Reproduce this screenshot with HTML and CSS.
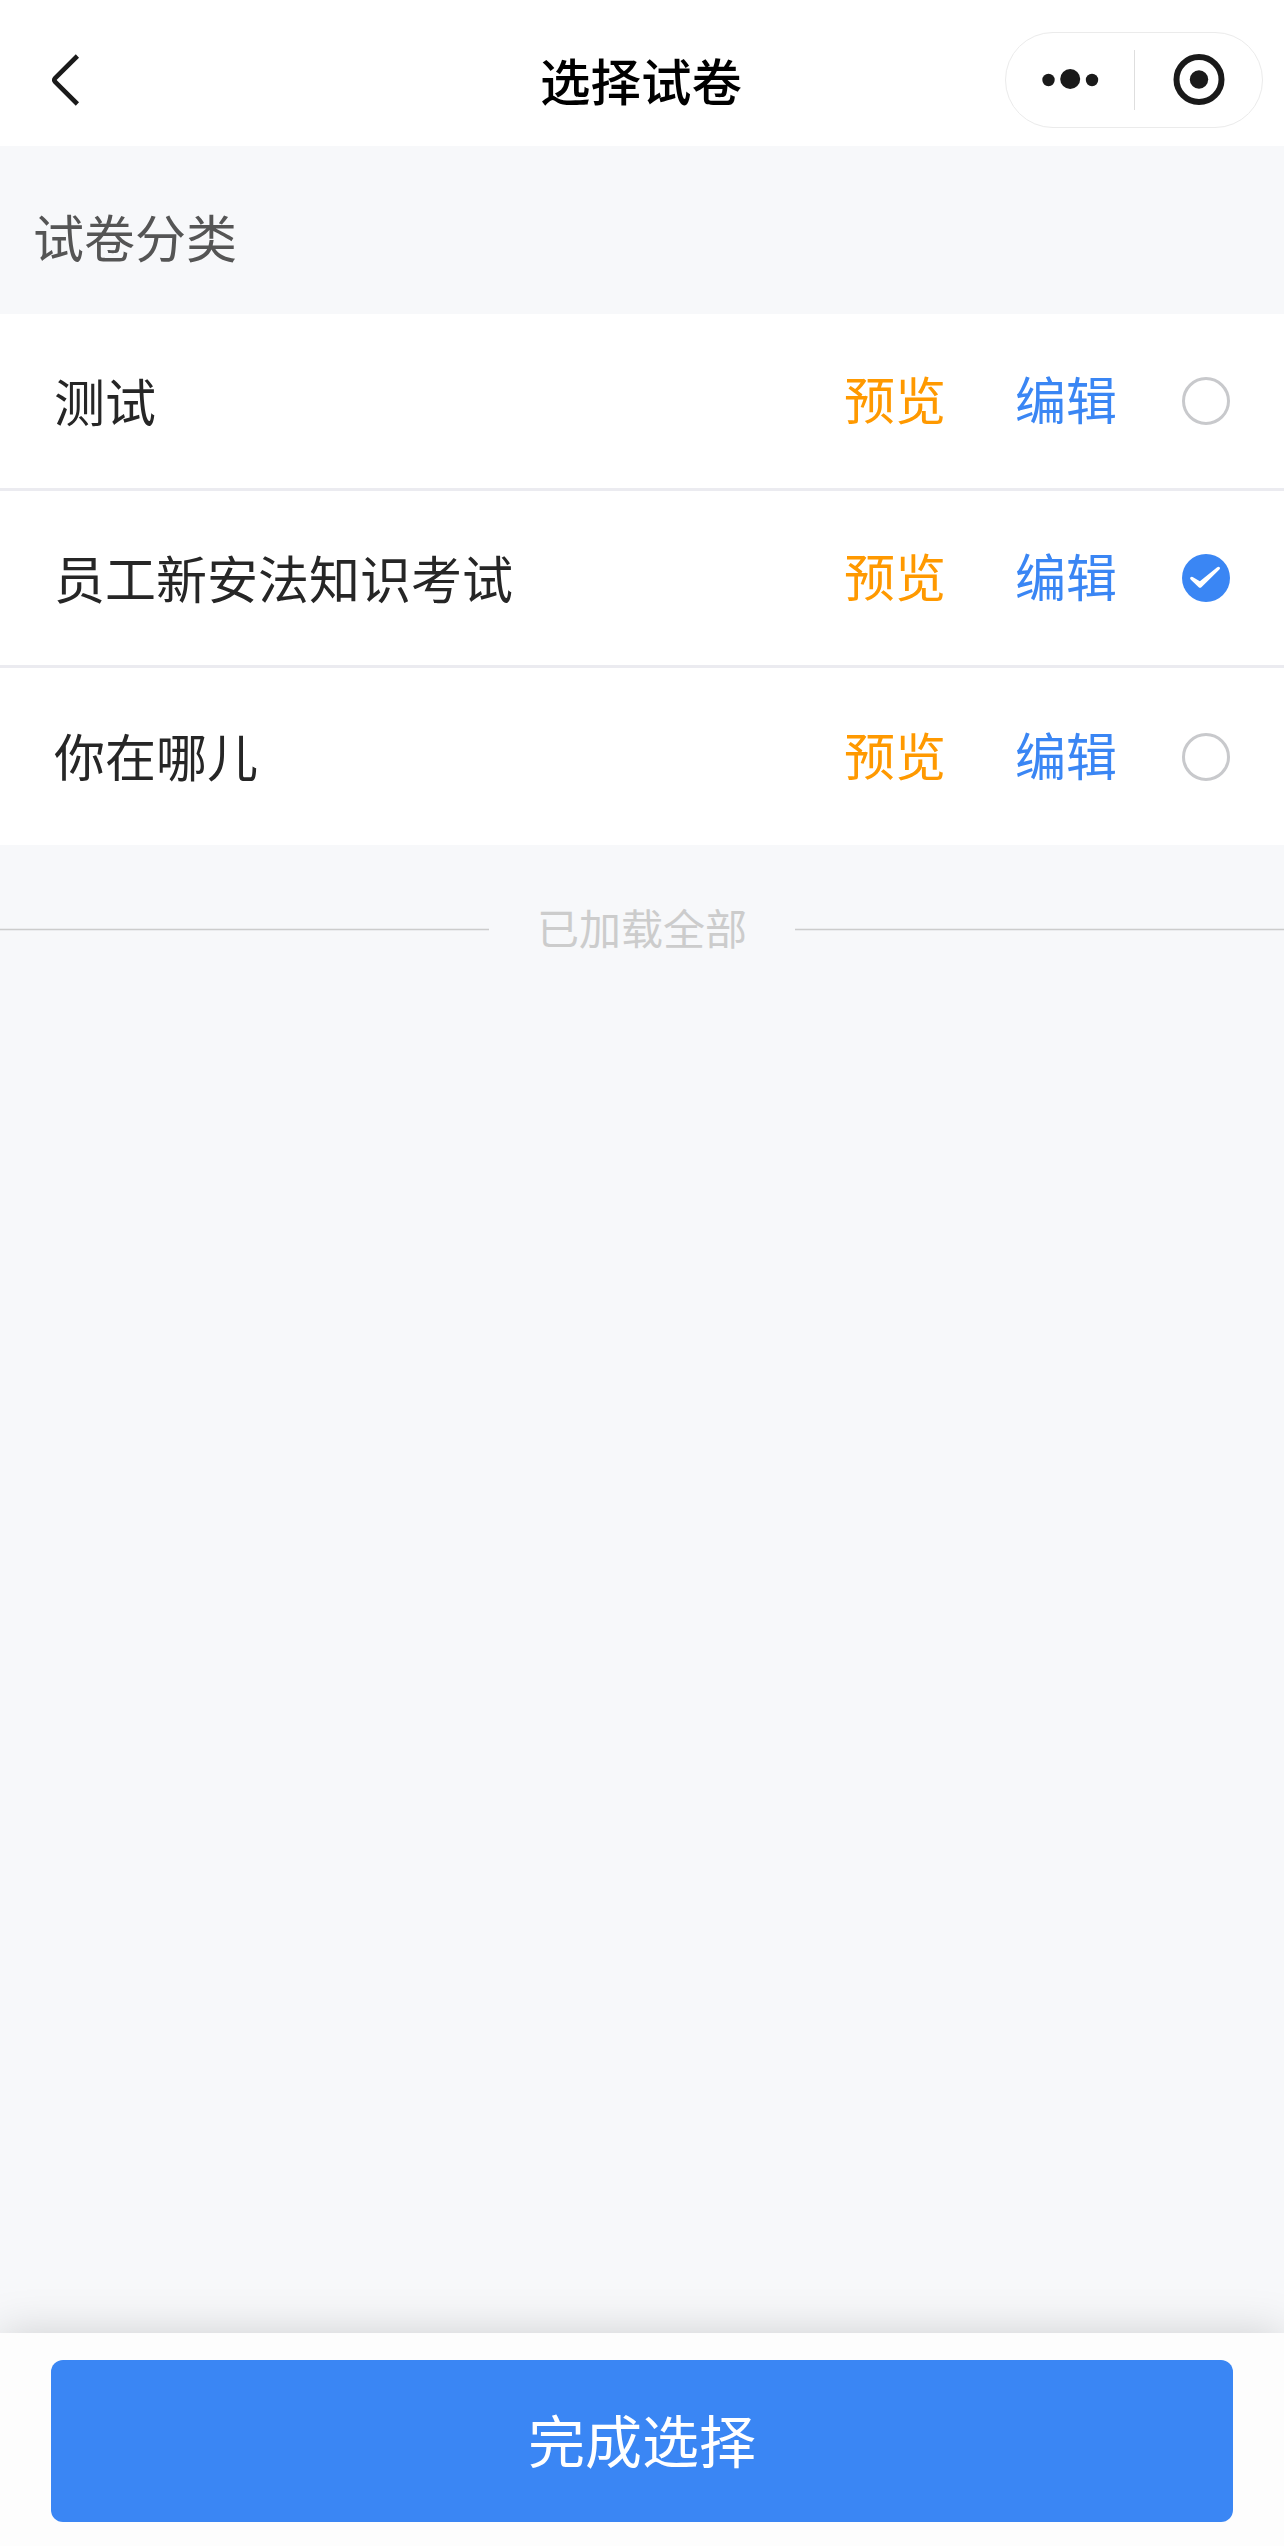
FILE: index.html
```html
<!DOCTYPE html>
<html lang="zh-CN">
<head>
<meta charset="UTF-8">
<title>选择试卷</title>
<link rel="stylesheet" href="styles.css">
</head>
<body>

<div class="page">
  <header class="navbar">
    <svg class="back" width="30" height="56" viewBox="0 0 30 56">
      <path d="M27.4 4 L5.2 26 Q3.4 28 5.2 30 L27.4 52" fill="none" stroke="#1a1a1a" stroke-width="4.6"/>
    </svg>
    <h1 class="title">选择试卷</h1>
    <!-- 胶囊按钮 -->
    <div class="capsule">
      <svg width="128" height="94" viewBox="0 0 128 94">
        <circle cx="42.5" cy="47" r="6.2" fill="#1a1a1a"/>
        <circle cx="64.2" cy="46" r="10" fill="#1a1a1a"/>
        <circle cx="86" cy="47" r="6.2" fill="#1a1a1a"/>
      </svg>
      <span class="divider"></span>
      <svg width="127" height="94" viewBox="0 0 127 94">
        <circle cx="64" cy="46.5" r="22.5" fill="none" stroke="#1a1a1a" stroke-width="6"/>
        <circle cx="64" cy="46.5" r="9.2" fill="#1a1a1a"/>
      </svg>
    </div>
  </header>

  <h2 class="section">试卷分类</h2>

  <ul class="list">
    <li class="row">
      <span class="name">测试</span>
      <a class="preview">预览</a>
      <a class="edit">编辑</a>
      <span class="radio"></span>
    </li>
    <li class="row">
      <span class="name">员工新安法知识考试</span>
      <a class="preview">预览</a>
      <a class="edit">编辑</a>
      <span class="radio checked">
        <svg width="48" height="48" viewBox="0 0 48 48">
          <path d="M10.6 22.9 L17.9 27.2 L35.2 13.3 Q36.8 12.3 37.7 13.3 Q38.5 14.4 37.4 15.6 L19.4 33.2 Q18 34.4 16.7 33.2 L8.6 25.6 Q7.6 24.2 8.5 23.3 Q9.4 22.4 10.6 22.9 Z" fill="#fff"/>
        </svg>
      </span>
    </li>
    <li class="row">
      <span class="name">你在哪儿</span>
      <a class="preview">预览</a>
      <a class="edit">编辑</a>
      <span class="radio"></span>
    </li>
  </ul>

  <div class="loaded"><span>已加载全部</span></div>

  <footer class="footer">
    <button class="submit">完成选择</button>
  </footer>
</div>

</body>
</html>
```

FILE: styles.css
```css
*, *::before, *::after { box-sizing: border-box; }
body { margin: 0; background: #f7f8fa; font-family: "Noto Sans CJK SC", sans-serif; }
.page { display: flex; flex-direction: column; height: 2546px; overflow: hidden; }

.navbar { display: grid; grid-template-columns: 1fr auto 1fr; align-items: center; height: 146px; padding: 14px 21px 0 50px; background: #fff; }
.title { margin: 0 0 3px -31px; font-size: 50.5px; line-height: 76px; font-weight: 500; color: #000; }
.capsule { justify-self: end; display: flex; align-items: center; width: 258px; height: 96px; border: 1px solid #ebebeb; border-radius: 48px; }
.divider { width: 1px; height: 60px; background: #dedede; }

.section { height: 168px; margin: 0; padding: 14px 33px 0; font-size: 51px; line-height: 153px; font-weight: 400; color: #555; }

.list { margin: 0; padding: 0; list-style: none; background: #fff; }
.row { display: flex; align-items: center; height: 177px; padding: 0 54px; border-bottom: 3px solid #ebebf0; font-size: 51px; line-height: 76px; }
.row:last-child { border-bottom: none; }
.name { flex: 1; padding-bottom: 3px; color: #262626; }
.preview { margin-right: 69px; padding-bottom: 6px; color: #ff9900; }
.edit { margin-right: 65px; padding-bottom: 6px; color: #3a86f4; }
.radio { width: 48px; height: 48px; border: 3px solid #c8c9cc; border-radius: 50%; }
.radio.checked { border: none; background: #3a86f4; }
.radio svg { display: block; }

.loaded { display: flex; align-items: center; gap: 48px; height: 168px; font-size: 42px; line-height: 62px; color: #ccc; }
.loaded span { padding-bottom: 4px; }
.loaded::before, .loaded::after { content: ""; flex: 1; height: 3px; border: solid #ebecee; border-width: 1px 0; background: #ccc; }

.footer { height: 213px; margin-top: auto; padding: 27px 51px 0; background: #fdfdfd; box-shadow: 0 0 42px rgba(0, 0, 0, 0.17); }
.submit { display: block; width: 100%; height: 162px; padding: 0 0 6px; border: none; border-radius: 12px; background: #3a86f4; color: #fff; font-family: inherit; font-size: 57px; line-height: 156px; }
```
